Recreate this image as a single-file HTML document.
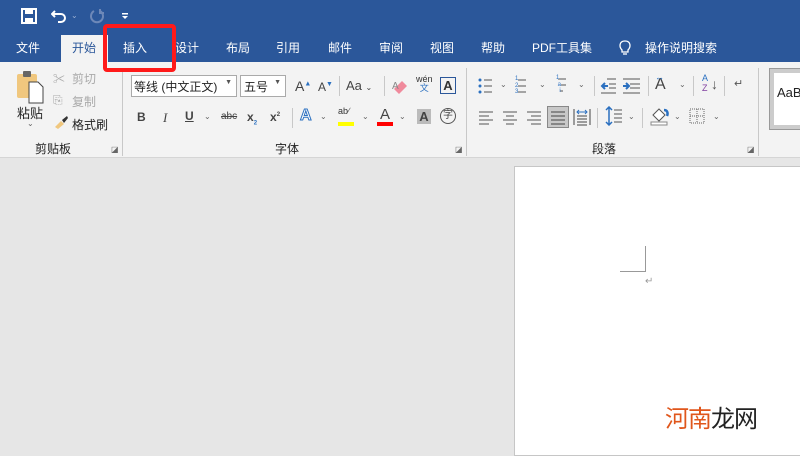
<!DOCTYPE html>
<html><head><meta charset="utf-8"><style>
*{margin:0;padding:0;box-sizing:border-box}
body{width:800px;height:450px;overflow:hidden;position:relative;background:#e6e6e6;font-family:"Liberation Sans","Noto Sans CJK SC",sans-serif;font-size:12px;color:#333}
.a{position:absolute;white-space:nowrap}
.w{color:#fff;font-size:12px}
.sep{position:absolute;width:1px;background:#c8c8c8}
.dd{position:absolute;font-size:8px;color:#666}
svg{position:absolute}
.lines{position:absolute;width:16px}
.lines i{display:block;height:1px;background:#555;margin-bottom:3px}
</style></head><body>
<div class="a" style="left:0;top:0;width:800px;height:62px;background:#2b579a"></div>
<!-- QAT -->
<svg style="left:21px;top:8px" width="16" height="16"><rect x="1" y="1" width="14" height="14" fill="none" stroke="#fff" stroke-width="2"/><rect x="4" y="1" width="8" height="5" fill="#fff"/><rect x="4" y="10" width="8" height="5" fill="#fff"/></svg>
<svg style="left:51px;top:8px" width="16" height="16"><path d="M4 3 L1 6 L4 9 M1 6 H10 A4 4 0 0 1 10 14 H7" fill="none" stroke="#fff" stroke-width="2"/></svg>
<div class="dd" style="left:71px;top:11px;color:#9bb0d3">⌄</div>
<svg style="left:89px;top:8px" width="16" height="16"><path d="M11 3 A6 6 0 1 1 5 3" fill="none" stroke="#6d88b8" stroke-width="2"/><path d="M11 1 V5 H15" fill="none" stroke="#6d88b8" stroke-width="2"/></svg>
<svg style="left:121px;top:12px" width="8" height="8"><rect x="1" y="1" width="6" height="1.5" fill="#fff"/><path d="M1 4 H7 L4 7Z" fill="#fff"/></svg>
<!-- tabs -->
<div class="a" style="left:61px;top:35px;width:47px;height:27px;background:#f3f3f3"></div>
<div class="a w" style="left:16px;top:39px">文件</div>
<div class="a" style="left:72px;top:39px;color:#2b579a">开始</div>
<div class="a w" style="left:123px;top:39px">插入</div>
<div class="a w" style="left:175px;top:39px">设计</div>
<div class="a w" style="left:226px;top:39px">布局</div>
<div class="a w" style="left:276px;top:39px">引用</div>
<div class="a w" style="left:328px;top:39px">邮件</div>
<div class="a w" style="left:379px;top:39px">审阅</div>
<div class="a w" style="left:430px;top:39px">视图</div>
<div class="a w" style="left:481px;top:39px">帮助</div>
<div class="a w" style="left:532px;top:39px">PDF工具集</div>
<svg style="left:618px;top:39px" width="14" height="18"><path d="M4 11 C1 8 1 2 7 2 C13 2 13 8 10 11 V13 H4Z" fill="none" stroke="#fff" stroke-width="1.3"/><path d="M5 15 H9" stroke="#fff" stroke-width="1.3"/></svg>
<div class="a w" style="left:645px;top:39px">操作说明搜索</div>
<!-- ribbon -->
<div class="a" style="left:0;top:62px;width:800px;height:96px;background:#f3f3f3;border-bottom:1px solid #d5d5d5"></div>
<div class="sep" style="left:122px;top:68px;height:88px"></div>
<div class="sep" style="left:466px;top:68px;height:88px"></div>
<div class="sep" style="left:758px;top:68px;height:88px"></div>
<!-- clipboard -->
<svg style="left:16px;top:70px" width="30" height="34"><rect x="1" y="4" width="20" height="24" rx="2" fill="#f0c77e"/><rect x="7" y="1" width="8" height="6" rx="1" fill="#666"/><path d="M13 12 H22 L27 17 V33 H13Z" fill="#fff" stroke="#444"/></svg>
<div class="a" style="left:17px;top:103px;font-size:13px;color:#222">粘贴</div>
<div class="dd" style="left:27px;top:119px">⌄</div>
<div class="a" style="left:53px;top:70px;color:#aaa">✂</div>
<div class="a" style="left:72px;top:70px;color:#aaa">剪切</div>
<div class="a" style="left:53px;top:93px;color:#aaa">⎘</div>
<div class="a" style="left:72px;top:93px;color:#aaa">复制</div>
<svg style="left:53px;top:115px" width="16" height="14"><path d="M2 12 L8 6 L11 9 L5 14Z" fill="#f0c77e"/><path d="M9 5 L14 1 L15 3 L11 8Z" fill="#333"/></svg>
<div class="a" style="left:72px;top:116px;color:#222">格式刷</div>
<div class="a" style="left:35px;top:140px;color:#222">剪贴板</div>
<div class="a" style="left:111px;top:145px;font-size:8px;color:#666">◪</div>
<!-- font -->
<div class="a" style="left:131px;top:75px;width:106px;height:22px;background:#fff;border:1px solid #aaa;padding:2px 2px;font-size:12px;color:#222">等线 (中文正文)<span style="position:absolute;right:4px;top:3px;font-size:7px;color:#555">▼</span></div>
<div class="a" style="left:240px;top:75px;width:46px;height:22px;background:#fff;border:1px solid #aaa;padding:2px 3px;color:#222">五号<span style="position:absolute;right:4px;top:3px;font-size:7px;color:#555">▼</span></div>
<div class="a" style="left:295px;top:78px;font-size:14px;color:#444">A<sup style="font-size:7px;color:#2b70c0">▲</sup></div>
<div class="a" style="left:318px;top:80px;font-size:12px;color:#444">A<sup style="font-size:7px;color:#2b70c0">▼</sup></div>
<div class="sep" style="left:339px;top:76px;height:20px"></div>
<div class="a" style="left:346px;top:78px;font-size:13px;color:#444">Aa <span style="font-size:8px">⌄</span></div>
<div class="sep" style="left:384px;top:76px;height:20px"></div>
<svg style="left:391px;top:77px" width="18" height="18"><path d="M3 12 L11 4 L16 9 L8 17Z" fill="#f08a9c"/><text x="1" y="12" font-size="10" fill="#888" font-family="Liberation Sans">A</text></svg>
<div class="a" style="left:416px;top:75px;font-size:9px;color:#333;line-height:9px;text-align:center">wén<br><span style="color:#2b70c0">文</span></div>
<div class="a" style="left:440px;top:77px;width:16px;height:17px;border:1px solid #2b579a;font-size:13px;text-align:center;line-height:15px;color:#333;font-weight:bold">A</div>
<div class="a" style="left:137px;top:110px;font-weight:bold;color:#444">B</div>
<div class="a" style="left:163px;top:110px;font-style:italic;font-family:'Liberation Serif';font-size:13px;color:#444">I</div>
<div class="a" style="left:185px;top:109px;text-decoration:underline;color:#444;font-weight:bold">U</div>
<div class="dd" style="left:204px;top:112px">⌄</div>
<div class="a" style="left:221px;top:111px;font-size:10px;color:#444;text-decoration:line-through">abc</div>
<div class="a" style="left:247px;top:110px;font-weight:bold;color:#444">x<sub style="font-size:6px;color:#2b70c0">2</sub></div>
<div class="a" style="left:270px;top:110px;font-weight:bold;color:#444">x<sup style="font-size:6px">2</sup></div>
<div class="sep" style="left:292px;top:108px;height:20px"></div>
<div class="a" style="left:300px;top:107px;font-size:16px;color:#fff;-webkit-text-stroke:1px #2b70c0;font-weight:bold">A</div>
<div class="dd" style="left:320px;top:112px">⌄</div>
<div class="a" style="left:338px;top:106px;font-size:9px;color:#333">ab<span style="color:#555">∕</span></div>
<div class="a" style="left:338px;top:122px;width:16px;height:4px;background:#ffff00"></div>
<div class="dd" style="left:362px;top:112px">⌄</div>
<div class="a" style="left:380px;top:106px;font-size:15px;color:#444">A</div>
<div class="a" style="left:377px;top:122px;width:16px;height:4px;background:#f00"></div>
<div class="dd" style="left:399px;top:112px">⌄</div>
<div class="a" style="left:417px;top:109px;width:14px;height:15px;background:#bbb;font-weight:bold;color:#444;font-size:13px;text-align:center;line-height:15px">A</div>
<div class="a" style="left:440px;top:108px;width:16px;height:16px;border:1px solid #555;border-radius:50%;font-size:10px;text-align:center;line-height:14px;color:#444">字</div>
<div class="a" style="left:275px;top:140px;color:#222">字体</div>
<div class="a" style="left:455px;top:145px;font-size:8px;color:#666">◪</div>
<!-- paragraph -->
<svg style="left:477px;top:76px" width="90" height="20" stroke="#555" fill="#2b70c0"><circle cx="3" cy="4" r="1.5" stroke="none"/><circle cx="3" cy="10" r="1.5" stroke="none"/><circle cx="3" cy="16" r="1.5" stroke="none"/><path d="M7 4H15M7 10H15M7 16H15"/><path d="M41 4H49M41 10H49M41 16H49"/><path d="M81 3H89M84 9H89M83 15H86"/></svg>
<div class="a" style="left:515px;top:76px;font-size:6px;line-height:6.5px;color:#2b70c0">1<br>2<br>3</div>
<div class="a" style="left:556px;top:75px;font-size:6px;line-height:6.5px;color:#2b70c0">1<br>&nbsp;a<br>&nbsp;&nbsp;i</div>
<div class="dd" style="left:500px;top:80px">⌄</div><div class="dd" style="left:539px;top:80px">⌄</div><div class="dd" style="left:578px;top:80px">⌄</div>
<div class="sep" style="left:594px;top:76px;height:20px"></div>
<svg style="left:600px;top:77px" width="46" height="18" stroke="#555"><path d="M7 2H16M9 7H16M9 11H16M1 16H16M23 2H40M30 7H40M30 11H40M23 16H40"/><path d="M8 9H2M5 6L2 9L5 12" stroke="#2b70c0" stroke-width="2" fill="none"/><path d="M23 9H29M26 6L29 9L26 12" stroke="#2b70c0" stroke-width="2" fill="none"/></svg>
<div class="sep" style="left:648px;top:76px;height:20px"></div>
<div class="a" style="left:655px;top:76px;font-size:16px;color:#444">A</div>
<div class="a" style="left:655px;top:72px;font-size:9px;color:#2b70c0">↔</div>
<div class="dd" style="left:679px;top:80px">⌄</div>
<div class="sep" style="left:693px;top:76px;height:20px"></div>
<div class="a" style="left:702px;top:73px;font-size:9px;line-height:10px;color:#2b70c0">A<br><span style="color:#8040a0">Z</span></div>
<div class="a" style="left:711px;top:76px;font-size:14px;color:#555">↓</div>
<div class="sep" style="left:724px;top:76px;height:20px"></div>
<div class="a" style="left:734px;top:77px;font-size:11px;color:#555">↵</div>
<svg style="left:478px;top:108px" width="70" height="20" stroke="#555"><path d="M1 4H15M1 8H11M1 12H15M1 16H11M25 4H39M28 8H36M25 12H39M28 16H36M49 4H63M53 8H63M49 12H63M53 16H63"/></svg>
<div class="a" style="left:547px;top:106px;width:22px;height:22px;background:#c8c8c8;border:1px solid #888"></div>
<svg style="left:550px;top:109px" width="16" height="16" stroke="#444"><path d="M1 3H15M1 7H15M1 11H15M1 15H15"/></svg>
<svg style="left:573px;top:108px" width="18" height="18" stroke="#444"><path d="M1 1V17M17 1V17M4 8H14M4 11H14M4 14H14M4 17H14"/><path d="M4 4H14M6 2L4 4L6 6M12 2L14 4L12 6" stroke="#2b70c0" fill="none"/></svg>
<div class="sep" style="left:597px;top:108px;height:20px"></div>
<svg style="left:605px;top:106px" width="30" height="20" stroke="#555" fill="none"><path d="M9 4H17M9 8H17M9 12H17M9 16H17"/><path d="M4 1V19M1 4L4 1L7 4M1 16L4 19L7 16" stroke="#2b70c0" stroke-width="1.5"/></svg>
<div class="dd" style="left:628px;top:112px">⌄</div>
<div class="sep" style="left:642px;top:108px;height:20px"></div>
<svg style="left:650px;top:106px" width="22" height="20"><path d="M3 9L9 3L15 9L9 15Z" fill="#fff" stroke="#555"/><path d="M14 4C18 4 18 8 17 10" stroke="#2b70c0" stroke-width="2.5" fill="none"/><rect x="1" y="16" width="16" height="3" fill="#fff" stroke="#888"/></svg>
<div class="dd" style="left:674px;top:112px">⌄</div>
<svg style="left:689px;top:108px" width="16" height="16" stroke="#666" stroke-dasharray="1 1"><rect x="1" y="1" width="14" height="14" fill="none"/><path d="M8 1V15M1 8H15"/></svg>
<div class="dd" style="left:713px;top:112px">⌄</div>
<div class="a" style="left:592px;top:140px;color:#222">段落</div>
<div class="a" style="left:747px;top:145px;font-size:8px;color:#666">◪</div>
<!-- styles -->
<div class="a" style="left:769px;top:68px;width:40px;height:62px;background:#ccc;border:1px solid #999;padding:4px 0 0 4px"><div style="background:#fff;height:52px;padding:12px 0 0 3px;font-size:13px;color:#222">AaB</div></div>
<!-- red highlight -->
<div class="a" style="left:103px;top:24px;width:73px;height:48px;border:4px solid #ff1a1a;border-radius:4px"></div>
<!-- page -->
<div class="a" style="left:514px;top:166px;width:290px;height:290px;background:#fff;border:1px solid #c6c6c6"></div>
<div class="a" style="left:645px;top:246px;width:1px;height:26px;background:#999"></div>
<div class="a" style="left:620px;top:271px;width:26px;height:1px;background:#999"></div>
<div class="a" style="left:645px;top:276px;font-size:10px;color:#999">↵</div>
<div class="a" style="left:665px;top:399px;font-size:24px;color:#e0561b;letter-spacing:-1px">河南<span style="color:#222">龙网</span></div>
</body></html>
